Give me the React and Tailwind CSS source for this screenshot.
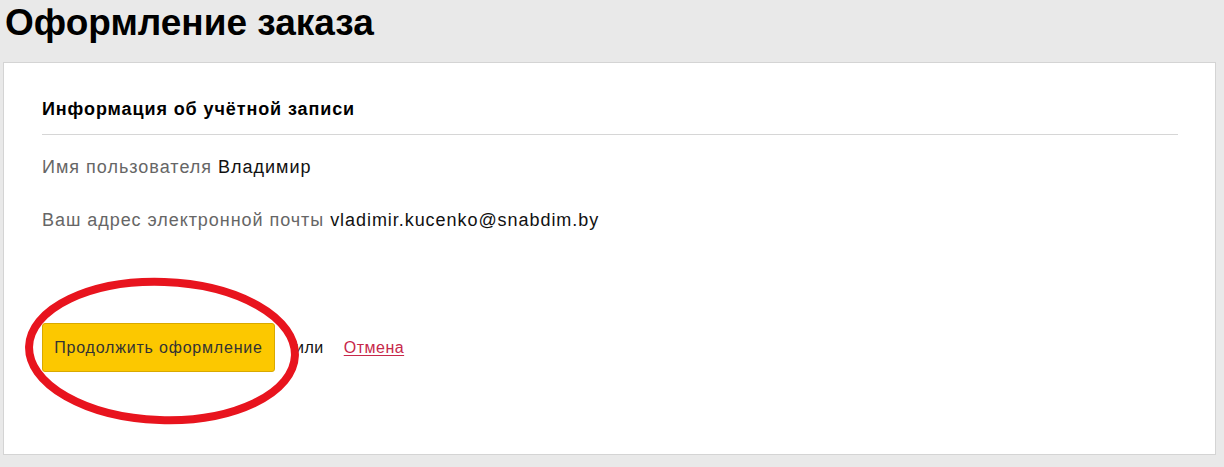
import React from 'react';

function App() {
  return (
    <div className="relative min-h-[467px] bg-[#e9e9e9] font-['Liberation_Sans',Arial,sans-serif] overflow-hidden">
      <h1 className="pl-[5px] pt-[1px] text-[37px] leading-[44px] font-bold text-black">Оформление заказа</h1>

      {/* Card */}
      <div className="mt-[17px] ml-[3px] w-[1213px] h-[393px] bg-white border border-[#d4d4d4] pl-[38px] pr-[37px]">
        <div className="pt-[36px] pb-[15px] border-b border-[#d6d6d6]">
          <h2 className="text-[18px] leading-[20px] font-bold tracking-[0.9px] text-black">Информация об учётной записи</h2>
        </div>

        <p className="mt-[21px] text-[18px] leading-[22px] tracking-[1px] text-[#666]">
          Имя пользователя <span className="text-[#111]">Владимир</span>
        </p>
        <p className="mt-[31px] text-[18px] leading-[22px] tracking-[0.95px] text-[#666]">
          Ваш адрес электронной почты <span className="text-[#111]">vladimir.kucenko@snabdim.by</span>
        </p>

        <div className="mt-[92px] flex items-center">
          <button className="w-[233px] h-[49px] rounded-[3px] bg-[#fcc800] border border-[#d9a900] text-[16px] tracking-[0.8px] text-[#333]">
            Продолжить оформление
          </button>
          <span className="ml-[20px] text-[16px] tracking-[0.5px] text-[#111]">или</span>
          <a href="#" className="ml-[20px] text-[16px] tracking-[0.5px] text-[#c7284a] underline underline-offset-2">Отмена</a>
        </div>
      </div>

      {/* red annotation ellipse */}
      <svg className="absolute left-[22px] top-[276px]" width="282" height="152" viewBox="0 0 282 152">
        <ellipse cx="140" cy="75" rx="133" ry="69" fill="none" stroke="#e8141e" strokeWidth="8" transform="rotate(2 140 75)" />
      </svg>
    </div>
  );
}

export default App;
